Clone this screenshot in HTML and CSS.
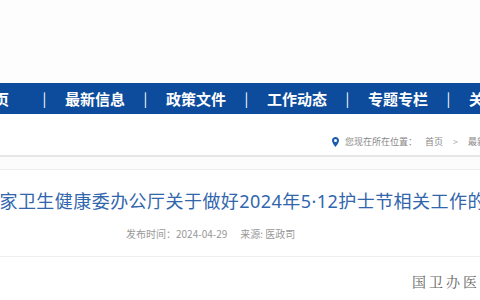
FILE: index.html
```html
<!DOCTYPE html>
<html lang="zh-CN">
<head>
  <meta charset="UTF-8">
  <meta name="viewport" content="width=device-width, initial-scale=1.0">
  <title>国家卫生健康委办公厅关于做好2024年5·12护士节相关工作的通知</title>
  <link rel="stylesheet" href="styles.css">
</head>
<body>
  <div class="header"></div>

  <div class="nav">
    <ul class="nav-list">
      <li class="nav-item">首页</li>
      <li class="sep">|</li>
      <li class="nav-item">最新信息</li>
      <li class="sep">|</li>
      <li class="nav-item">政策文件</li>
      <li class="sep">|</li>
      <li class="nav-item">工作动态</li>
      <li class="sep">|</li>
      <li class="nav-item">专题专栏</li>
      <li class="sep">|</li>
      <li class="nav-item">关于我们</li>
    </ul>
  </div>

  <div class="crumb">
    <svg class="pin" width="7" height="10" viewBox="0 0 7 10">
      <path d="M3.5 0C1.6 0 0 1.5 0 3.5 0 6 3.5 10 3.5 10S7 6 7 3.5C7 1.5 5.4 0 3.5 0zm0 5A1.5 1.5 0 1 1 3.5 2a1.5 1.5 0 0 1 0 3z" fill="#1c5bb0"/>
    </svg>
    <span class="crumb-label">您现在所在位置：</span>
    <span class="crumb-link">首页</span>
    <span class="crumb-arrow">&gt;</span>
    <span class="crumb-link">最新信息</span>
  </div>
  <div class="bar"></div>

  <div class="article">
    <h1 class="title">国家卫生健康委办公厅关于做好<span class="latin">2024</span>年<span class="latin">5·12</span>护士节相关工作的通知</h1>
    <div class="meta"><span>发布时间：</span><span class="date">2024-04-29</span><span>来源: 医政司</span></div>
    <div class="doc-no">国卫办医政函〔2024〕号</div>
  </div>
</body>
</html>
```

FILE: styles.css
```css
* {
  box-sizing: border-box;
}

body {
  margin: 0;
  width: 480px;
  overflow: hidden;
  background: #fff;
  font-family: "Noto Sans CJK SC", "Noto Sans", sans-serif;
}

.header {
  height: 83px;
  background: #fdfdfd;
}

/* nav */
.nav {
  height: 31px;
  background: #0d4b9c;
  color: #fff;
}

.nav-list {
  display: flex;
  margin: 0 0 0 -46px;
  padding: 0;
  list-style: none;
  white-space: nowrap;
  line-height: 31px;
}

.nav-list li {
  flex-shrink: 0;
}

.nav-item {
  width: 80px;
  text-align: center;
  font-size: 15px;
  font-weight: bold;
}

.sep {
  width: 21px;
  text-align: center;
  font-size: 14px;
}

/* breadcrumb */
.crumb {
  display: flex;
  align-items: center;
  height: 41px;
  padding: 18px 0 3px 332px;
  font-size: 9px;
  line-height: 20px;
  color: #888;
  white-space: nowrap;
}

.crumb > * {
  flex-shrink: 0;
}

.pin {
  margin-right: 6px;
}

.crumb-label {
  margin-right: 8px;
}

.crumb-arrow {
  margin: 0 10px;
  color: #aaa;
}

.bar {
  height: 15px;
  border-top: 2px solid #e6e6e6;
  border-bottom: 1px solid #eee;
  background: #fcfcfc;
}

/* article */
.article {
  margin-left: -19px;
  white-space: nowrap;
}

.title {
  margin: 15px 0 0;
  font-size: 18px;
  font-weight: normal;
  line-height: 30px;
  letter-spacing: 0.45px;
  color: #3166ad;
}

.latin {
  font-family: "Noto Sans", sans-serif;
}

.meta {
  margin-top: 10px;
  padding: 0 0 14px 145px;
  border-bottom: 1px solid #eee;
  font-size: 10px;
  line-height: 16px;
  color: #999;
}

.date {
  margin-right: 13px;
}

.doc-no {
  margin-top: 14px;
  padding-left: 431px;
  font-family: "Noto Serif CJK SC", "AR PL UMing CN", serif;
  font-size: 14px;
  line-height: 20px;
  letter-spacing: 3px;
  color: #666;
}
```
